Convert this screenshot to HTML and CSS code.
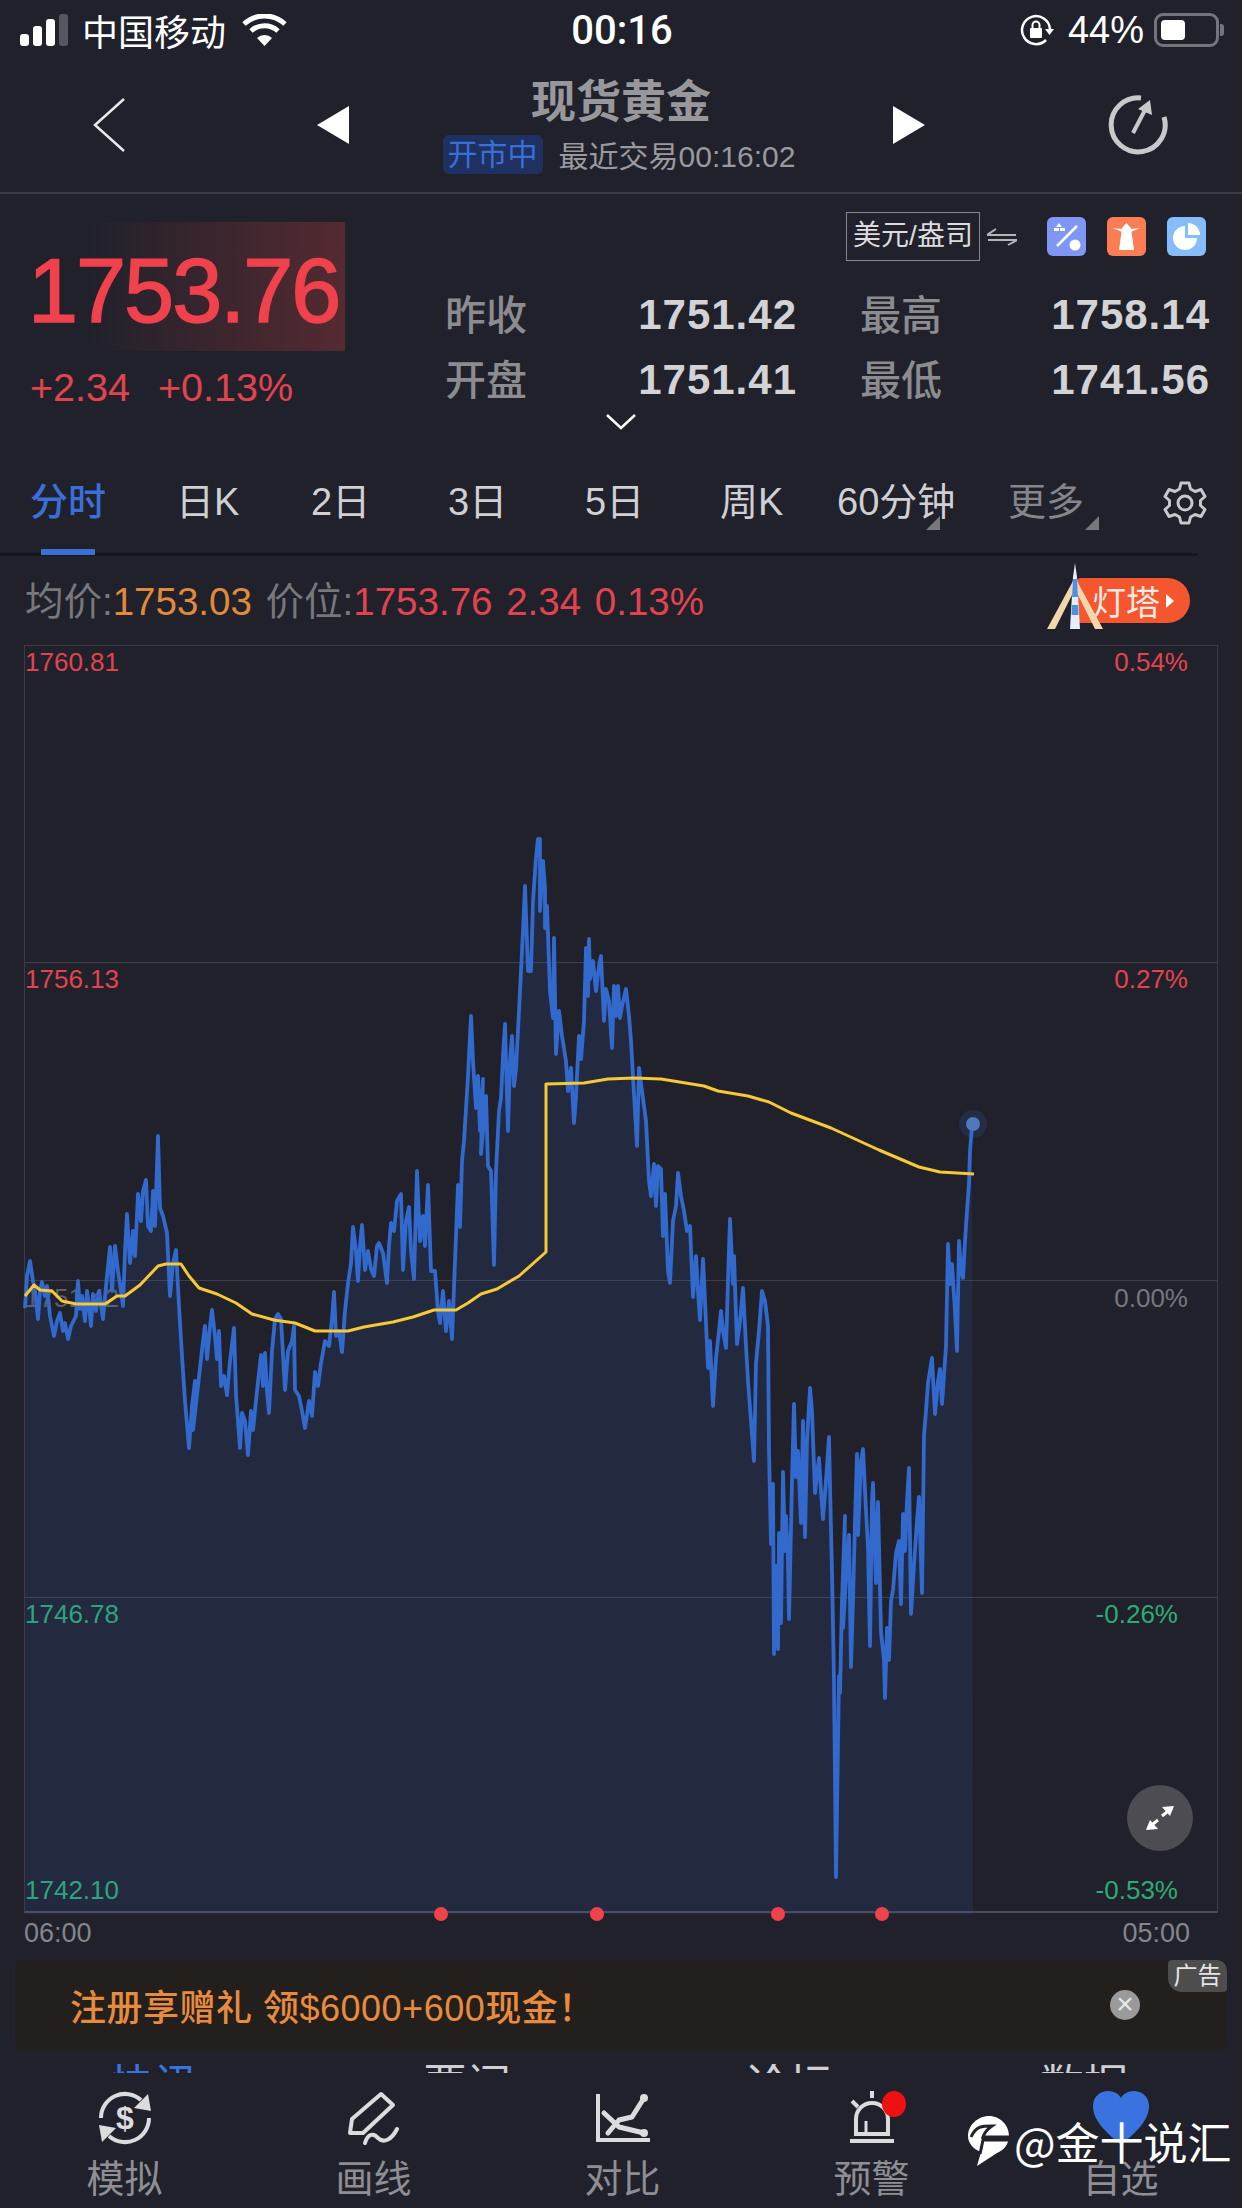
FILE: index.html
```html
<!DOCTYPE html>
<html>
<head>
  <meta charset="utf-8">
  <title>现货黄金</title>
  <link rel="stylesheet" href="styles.css">
</head>

<body>
  <div class="status-bar">
    <div class="status-left">
      <div class="signal"><i></i><i></i><i></i><i class="off"></i></div>
      <span>中国移动</span>
      <svg class="wifi" viewBox="0 0 47 32" width="47" height="32">
        <path d="M3 10 A30 30 0 0 1 44 10" fill="none" stroke="#fff" stroke-width="5"/>
        <path d="M10 17 A20 20 0 0 1 37 17" fill="none" stroke="#fff" stroke-width="5"/>
        <path d="M16 24 L23.5 32 L31 24 A11 11 0 0 0 16 24 Z" fill="#fff"/>
      </svg>
    </div>
    <div class="status-time">00:16</div>
    <div class="status-right">
      <svg class="rotate-lock" viewBox="0 0 34 34" width="34" height="34">
        <path d="M26 27 A14 14 0 1 1 30 16" fill="none" stroke="#fff" stroke-width="2.5"/>
        <path d="M25 16 H34 L29.500 22 Z" fill="#fff"/>
        <rect x="10" y="15" width="12" height="10" rx="1" fill="#fff"/>
        <path d="M12.500 15 V12 A3.500 3.500 0 0 1 19.500 12 V15" fill="none" stroke="#fff" stroke-width="2"/>
      </svg>
      <span>44%</span>
      <div class="battery"><div class="battery-level"></div></div>
      <div class="battery-nub"></div>
    </div>
  </div>

  <div class="nav">
    <svg viewBox="0 0 32 54" width="32" height="54">
      <path d="M31 1 L2 27 L31 53" fill="none" stroke="#e8e8ea" stroke-width="2.500"/>
    </svg>
    <div class="tri tri-left"></div>
    <div class="nav-center">
      <div class="nav-title">现货黄金</div>
      <div class="nav-sub">
        <span class="market-badge">开市中</span>
        <span>最近交易00:16:02</span>
      </div>
    </div>
    <div class="tri tri-right"></div>
    <span></span>
    <svg viewBox="0 0 60 60" width="60" height="60">
      <path d="M33 3 A27 27 0 1 0 56 22" fill="none" stroke="#c9c9cb" stroke-width="5"/>
      <path d="M25 38 L37 15" fill="none" stroke="#c9c9cb" stroke-width="4"/>
      <path d="M42 5 L30 14 L44 20 Z" fill="#c9c9cb"/>
    </svg>
  </div>

  <div class="quote">
    <div class="quote-left">
      <div class="price-box">1753.76</div>
      <div class="change"><span>+2.34</span><span>+0.13%</span></div>
    </div>
    <div class="quote-right">
      <div class="unit-row">
        <div class="unit-box">美元/盎司</div>
        <svg class="swap" viewBox="0 0 30 18" width="30" height="18">
          <path d="M0 7 H29 M0 7 L9 1 M30 12 H1 M30 12 L21 17" fill="none" stroke="#b5b5b8" stroke-width="2"/>
        </svg>
        <div class="tool tool-blue">
          <svg viewBox="0 0 39 39" width="39" height="39">
            <path d="M10 29 L30 9" stroke="#fff" stroke-width="2.500"/>
            <circle cx="28" cy="28" r="5.500" fill="#fff"/>
            <path d="M12 6 l3 4 h-6 Z M7 11 h5 v3 h-5 Z M13 11 h5 v3 h-5 Z" fill="#fff"/>
          </svg>
        </div>
        <div class="tool tool-orange">
          <svg viewBox="0 0 39 39" width="39" height="39">
            <path d="M15 11 L19.500 6 L24 11 L27 33 H12 Z" fill="#fff"/>
            <path d="M6 11 L15 12 V15 Z M33 11 L24 12 V15 Z" fill="#fff"/>
          </svg>
        </div>
        <div class="tool tool-light">
          <svg viewBox="0 0 39 39" width="39" height="39">
            <path d="M18 9 V21 H30 A12 12 0 1 1 18 9 Z" fill="#fff"/>
            <path d="M21 6 A12 12 0 0 1 33 18 H21 Z" fill="#fff"/>
          </svg>
        </div>
      </div>
      <div class="stats">
        <div class="stat"><span class="stat-label">昨收</span><span class="stat-value">1751.42</span></div>
        <div class="stat"><span class="stat-label">最高</span><span class="stat-value">1758.14</span></div>
        <div class="stat"><span class="stat-label">开盘</span><span class="stat-value">1751.41</span></div>
        <div class="stat"><span class="stat-label">最低</span><span class="stat-value">1741.56</span></div>
      </div>
    </div>
  </div>
  <div class="expand-row">
    <svg viewBox="0 0 30 16" width="30" height="16">
      <path d="M1 1 L15 14 L29 1" fill="none" stroke="#fff" stroke-width="2.500"/>
    </svg>
  </div>

  <div class="tabs">
    <div class="tab active">分时</div>
    <div class="tab">日K</div>
    <div class="tab">2日</div>
    <div class="tab">3日</div>
    <div class="tab">5日</div>
    <div class="tab">周K</div>
    <div class="tab has-menu">60分钟</div>
    <div class="tab has-menu dim">更多</div>
    <svg class="gear" viewBox="0 0 44 44" width="44" height="44">
      <path d="M18 2 H26 L27.500 8 L32 10.500 L38 8.500 L42 15.500 L37.500 19.500 V24.500 L42 28.500 L38 35.500 L32 33.500 L27.500 36 L26 42 H18 L16.500 36 L12 33.500 L6 35.500 L2 28.500 L6.500 24.500 V19.500 L2 15.500 L6 8.500 L12 10.500 L16.500 8 Z" fill="none" stroke="#c8c8cb" stroke-width="3" stroke-linejoin="round"/>
      <circle cx="22" cy="22" r="7" fill="none" stroke="#c8c8cb" stroke-width="3"/>
    </svg>
  </div>

  <div class="info-row">
    <div class="info-text">
      <span class="gray">均价:</span><span class="orange">1753.03</span>
      <span class="gray gap">价位:</span><span class="red">1753.76</span>
      <span class="red gap">2.34</span>
      <span class="red gap">0.13%</span>
    </div>
    <div class="beacon">
      <svg class="lighthouse" viewBox="0 0 60 68" width="60" height="68">
        <path d="M28 18 L2 66 H10 L29 28 Z M32 18 L58 66 H50 L31 28 Z" fill="#f3d6ac"/>
        <path d="M30 0 L32 14 L35 66 H25 L28 14 Z" fill="#e6eefa"/>
        <path d="M28 16 H32 L33 34 H27 Z M27 42 H33 L33.500 52 H26.500 Z" fill="#4f8ee0"/>
      </svg>
      <span>灯塔</span>
      <i class="beacon-arrow"></i>
    </div>
  </div>

  <div class="chart">
    <div class="chart-row row-a">
      <div class="label-line"><span class="red">1760.81</span><span class="red pct">0.54%</span></div>
    </div>
    <div class="chart-row row-b">
      <div class="label-line"><span class="red">1756.13</span><span class="red pct">0.27%</span></div>
    </div>
    <div class="chart-row row-c">
      <div class="label-line"><span class="faint">1751.42</span><span class="gray pct">0.00%</span></div>
    </div>
    <div class="chart-row row-d">
      <div class="label-line"><span class="green">1746.78</span><span class="green pct-low">-0.26%</span></div>
      <div class="label-line last"><span class="green">1742.10</span><span class="green pct-low">-0.53%</span></div>
    </div>
    <svg class="chart-plot" viewBox="24 645 1194 1268">
      <polygon id="priceArea" fill="#3a6fd6" fill-opacity="0.12"></polygon>
      <polyline id="priceLine" fill="none" stroke="#3269cd" stroke-width="3.800" stroke-linejoin="round"></polyline>
      <polyline fill="none" stroke="#f6c935" stroke-linejoin="round" stroke-width="3" points="24,1295 33,1284 39,1289 51,1290 61,1300 75,1303 104,1303 116,1295 124,1295 139,1284 157,1265 165,1263 180,1263 188,1275 198,1287 216,1293 235,1302 251,1313 273,1319 294,1322 314,1330 347,1330 363,1326 392,1321 412,1316 433,1309 455,1309 467,1302 480,1293 496,1288 518,1275 545,1251 545,1083 583,1082 607,1078 633,1077 660,1078 703,1085 717,1090 747,1095 768,1101 790,1112 830,1127 878,1149 918,1166 939,1171 973,1173"></polyline>
      <circle cx="972" cy="1123" r="14" fill="#3a6fd6" opacity="0.15"></circle>
      <circle cx="972" cy="1123" r="7" fill="#4f78bd"></circle>
      <circle cx="440" cy="1913" r="7" fill="#f0424a"></circle>
      <circle cx="596" cy="1913" r="7" fill="#f0424a"></circle>
      <circle cx="777" cy="1913" r="7" fill="#f0424a"></circle>
      <circle cx="881" cy="1913" r="7" fill="#f0424a"></circle>
    </svg>
    <div class="fullscreen">
      <svg viewBox="0 0 30 30" width="30" height="30">
        <path d="M17 13 L27 5 M13 17 L3 25" stroke="#fff" stroke-width="3"/>
        <path d="M29 3 L17 4 L25 13 Z M1 27 L13 26 L5 17 Z" fill="#fff"/>
      </svg>
    </div>
  </div>

  <div class="axis"><span>06:00</span><span>05:00</span></div>

  <div class="ad">
    <span class="ad-text">注册享赠礼&nbsp;领$6000+600现金！</span>
    <div class="ad-close">×</div>
    <div class="ad-tag">广告</div>
  </div>

  <div class="peek-row">
    <span class="blue">快讯</span><span>要闻</span><span>论坛</span><span>数据</span>
  </div>

  <div class="bottom-bar">
    <div class="bottom-item">
      <svg viewBox="0 0 54 54" width="54" height="54">
        <path d="M3 27 A24 24 0 0 1 43 9" fill="none" stroke="#dcdcdf" stroke-width="4"/>
        <path d="M51 27 A24 24 0 0 1 11 45" fill="none" stroke="#dcdcdf" stroke-width="4"/>
        <path d="M50 3 L53 20 L36 17 Z M4 51 L1 34 L18 37 Z" fill="#dcdcdf"/>
        <text x="27" y="38" text-anchor="middle" class="dollar">$</text>
      </svg>
      <span>模拟</span>
    </div>
    <div class="bottom-item">
      <svg viewBox="0 0 51 54" width="51" height="54">
        <path d="M2 42 L4 28 L33 3 L45 14 L15 42 Z" fill="none" stroke="#dcdcdf" stroke-width="4" stroke-linejoin="round"/>
        <path d="M17 52 C20 42 26 42 30 47 C36 53 44 48 49 38" fill="none" stroke="#dcdcdf" stroke-width="4" stroke-linecap="round"/>
      </svg>
      <span>画线</span>
    </div>
    <div class="bottom-item">
      <svg viewBox="0 0 54 54" width="54" height="54">
        <path d="M2 3 V49 H54" fill="none" stroke="#dcdcdf" stroke-width="4"/>
        <path d="M8 22 L23 36 L48 42 M12 42 L23 29 L36 26 L48 7" fill="none" stroke="#dcdcdf" stroke-width="5" stroke-linecap="round" stroke-linejoin="round"/>
        <circle cx="48" cy="7" r="4" fill="#dcdcdf"/>
        <circle cx="48" cy="42" r="4" fill="#dcdcdf"/>
      </svg>
      <span>对比</span>
    </div>
    <div class="bottom-item">
      <div class="bell-wrap">
        <svg viewBox="0 0 44 54" width="44" height="54">
          <path d="M6 43 V28 A16 16 0 0 1 38 28 V43 Z" fill="none" stroke="#dcdcdf" stroke-width="4"/>
          <path d="M16 43 V30" stroke="#dcdcdf" stroke-width="3"/>
          <path d="M0 50 H44" stroke="#dcdcdf" stroke-width="4"/>
          <path d="M22 0 V7 M2 10 L8 16" stroke="#dcdcdf" stroke-width="4"/>
        </svg>
        <i class="bell-dot"></i>
      </div>
      <span>预警</span>
    </div>
    <div class="bottom-item">
      <svg viewBox="0 0 56 54" width="56" height="54">
        <path d="M28 54 C14 42 0 30 0 15 C0 5 8 0 15 0 C21 0 26 3 28 7 C30 3 35 0 41 0 C48 0 56 5 56 15 C56 30 42 42 28 54 Z" fill="#3a72e0"/>
      </svg>
      <span>自选</span>
    </div>
  </div>

  <div class="watermark">
    <svg viewBox="0 0 42 50" width="42" height="50">
      <path d="M21 0 C32 0 41 9 41 20 C41 28 36 34 29 37 L9 50 L13 36 C5 33 0 27 0 20 C0 9 10 0 21 0 Z" fill="#fff"/>
      <path d="M3 21 C8 10 14 10 24 10 C18 14 16 18 15 21 H40 V24 H15 L12 38" fill="none" stroke="#21222c" stroke-width="3"/>
    </svg>
    <span>@金十说汇</span>
  </div>

  <script src="chart.js"></script>
</body>
</html>
```

FILE: styles.css
```css
* {
  box-sizing: border-box;
}

body {
  margin: 0;
  width: 1242px;
  height: 2208px;
  overflow: hidden;
  position: relative;
  background-color: #20212b;
  color: #fff;
  font-family: "Liberation Sans", "Noto Sans CJK SC", sans-serif;
}

svg {
  display: block;
}

.red { color: #e2444f; }
.orange { color: #e08a3c; }
.gray { color: #77777c; }
.green { color: #2dab77; }
.faint { color: #5e5f68; }
.blue { color: #3a72e0; }

/* status bar */
.status-bar {
  height: 60px;
  padding: 0 18px 0 20px;
  display: grid;
  grid-template-columns: 1fr auto 1fr;
  align-items: center;
  font-size: 36px;
}

.status-left,
.status-right {
  display: flex;
  align-items: center;
}

.status-right {
  justify-content: flex-end;
  font-size: 38px;
}

.signal {
  display: flex;
  align-items: flex-end;
  gap: 4px;
  height: 32px;
  margin-right: 14px;
}

.signal i {
  display: block;
  width: 9px;
  border-radius: 3px;
  background-color: #fff;
}

.signal i:nth-child(1) { height: 12px; }
.signal i:nth-child(2) { height: 20px; }
.signal i:nth-child(3) { height: 27px; }
.signal i:nth-child(4) { height: 32px; }
.signal i.off { background-color: #55565e; }

.wifi {
  margin-left: 15px;
}

.status-time {
  font-family: Roboto, "Liberation Sans", sans-serif;
  font-weight: 500;
  font-size: 40px;
}

.rotate-lock {
  margin-right: 14px;
}

.battery {
  width: 65px;
  height: 34px;
  margin-left: 10px;
  padding: 4px;
  border: 3px solid #74757b;
  border-radius: 9px;
}

.battery-level {
  width: 24px;
  height: 100%;
  border-radius: 4px;
  background-color: #fff;
}

.battery-nub {
  width: 4px;
  height: 12px;
  margin-left: 1px;
  border-radius: 0 3px 3px 0;
  background-color: #74757b;
}

/* nav */
.nav {
  height: 134px;
  padding: 0 74px 2px 93px;
  display: grid;
  grid-template-columns: 224px 32px 1fr 32px 183px 60px;
  align-items: center;
  border-bottom: 2px solid #3a3b45;
}

.tri {
  width: 0;
  height: 0;
  border-top: 19px solid transparent;
  border-bottom: 19px solid transparent;
}

.tri-left {
  border-right: 32px solid #fff;
}

.tri-right {
  border-left: 32px solid #fff;
}

.nav-center {
  display: flex;
  flex-direction: column;
  align-items: center;
  padding-top: 6px;
}

.nav-title {
  font-size: 45px;
  line-height: 46px;
  font-weight: bold;
  color: #98989c;
}

.nav-sub {
  display: flex;
  align-items: center;
  gap: 16px;
  margin: 6px 4px 0 0;
  font-size: 30px;
  color: #9a9a9e;
}

.market-badge {
  padding: 0 5px;
  line-height: 39px;
  border-radius: 6px;
  background-color: #1e3160;
  color: #3a6fd8;
}

/* quote */
.quote {
  display: flex;
  height: 220px;
}

.quote-left {
  width: 445px;
  padding-top: 28px;
}

.price-box {
  width: 345px;
  height: 129px;
  padding: 9px 0 0 28px;
  line-height: 120px;
  font-size: 90px;
  letter-spacing: -2px;
  color: #f0424c;
  -webkit-text-stroke: 1.500px #f0424c;
  background: linear-gradient(90deg, transparent 25%, #552a31 100%);
}

.change {
  display: flex;
  gap: 28px;
  padding-left: 30px;
  margin-top: 14px;
  font-size: 39.500px;
  color: #e2444f;
}

.quote-right {
  width: 765px;
  padding-top: 18px;
}

.unit-row {
  display: flex;
  align-items: center;
  height: 49px;
  padding-left: 401px;
}

.unit-box {
  flex: none;
  width: 134px;
  height: 49px;
  line-height: 46px;
  text-align: center;
  font-size: 28px;
  white-space: nowrap;
  color: #dcdcde;
  border: 1px solid #85858a;
}

.swap {
  flex: none;
  margin: 0 30px 0 7px;
}

.tool {
  flex: none;
  width: 39px;
  height: 39px;
  margin-right: 21px;
  border-radius: 6px;
}

.tool:last-child {
  margin-right: 0;
}

.tool-blue { background-color: #7f96f5; }
.tool-orange { background-color: #fb7d53; }
.tool-light { background-color: #85bdfb; }

.stats {
  display: grid;
  grid-template-columns: 352px 350px;
  column-gap: 63px;
  margin-top: 21px;
}

.stat {
  display: flex;
  justify-content: space-between;
  align-items: center;
  height: 65px;
}

.stat-label {
  margin-bottom: 6px;
  font-size: 41px;
  font-weight: 500;
  color: #8b8b90;
}

.stat-value {
  font-size: 42px;
  font-weight: bold;
  letter-spacing: 1px;
  color: #d2d2d7;
}

.expand-row {
  height: 26px;
  display: flex;
  justify-content: center;
}

/* tabs */
.tabs {
  display: grid;
  grid-template-columns: 146px 135px 137px 137px 135px 117px 171px 155px 44px;
  align-items: center;
  height: 116px;
  margin-right: 44px;
  padding: 4px 0 0 30px;
  font-size: 38px;
  border-bottom: 3px solid #15151c;
  position: relative;
}

.tab {
  color: #d0d0d4;
  position: relative;
  white-space: nowrap;
}

.tab.dim {
  color: #85858a;
}

.tab.active {
  color: #3a6fd8;
  font-weight: 500;
}

.tab.active::after {
  content: '';
  position: absolute;
  left: 11px;
  top: 78px;
  width: 54px;
  height: 6px;
  background-color: #3a6fd8;
}

.tab.has-menu::after {
  content: '';
  position: absolute;
  top: 45px;
  left: 89px;
  border-bottom: 14px solid #77777c;
  border-left: 14px solid transparent;
}

.tab.dim.has-menu::after {
  left: 77px;
}

.gear {
  margin-top: 8px;
}

/* info row */
.info-row {
  display: flex;
  justify-content: space-between;
  align-items: center;
  height: 89px;
  padding: 0 52px 0 25px;
}

.info-text {
  margin-bottom: 6px;
  font-size: 38.500px;
  white-space: nowrap;
}

.gap {
  margin-left: 3px;
}

.beacon {
  position: relative;
  display: flex;
  align-items: center;
  width: 115px;
  height: 45px;
  padding-left: 17px;
  font-size: 34px;
  border-radius: 6px 23px 23px 6px;
  background-color: #f4572f;
  color: #ffe9e0;
}

.lighthouse {
  position: absolute;
  left: -30px;
  top: -15px;
}

.beacon-arrow {
  margin-left: 6px;
  border-left: 8px solid #fff;
  border-top: 7px solid transparent;
  border-bottom: 7px solid transparent;
}

/* chart */
.chart {
  position: relative;
  display: flex;
  flex-direction: column;
  width: 1194px;
  height: 1268px;
  margin-left: 24px;
  border: 1px solid #3a3b45;
  border-bottom: 2px solid #4a4b57;
  font-size: 26px;
}

.chart-row {
  display: flex;
  flex-direction: column;
  justify-content: space-between;
  padding-top: 1px;
  border-bottom: 1px solid #3e3f49;
}

.row-a { height: 317px; }
.row-b { height: 318px; }
.row-c { height: 317px; }
.row-d { height: 313px; border-bottom: none; }

.label-line {
  display: flex;
  justify-content: space-between;
  line-height: 30px;
  padding-right: 29px;
}

.label-line.last {
  padding-bottom: 6px;
}

.label-line .pct-low {
  margin-right: 10px;
}

.row-c .label-line {
  margin-top: 1px;
}

.chart-plot {
  position: absolute;
  left: 0;
  top: 0;
  width: 1194px;
  height: 1268px;
  overflow: visible;
}

.fullscreen {
  position: absolute;
  left: 1102px;
  top: 1139px;
  width: 66px;
  height: 66px;
  display: flex;
  align-items: center;
  justify-content: center;
  border-radius: 50%;
  background-color: #4c4c52;
}

.axis {
  display: flex;
  justify-content: space-between;
  height: 47px;
  padding: 4px 52px 0 24px;
  font-size: 27px;
  line-height: 32px;
  color: #85858a;
}

/* ad */
.ad {
  position: relative;
  display: flex;
  align-items: center;
  width: 1212px;
  height: 90px;
  margin-left: 15px;
  padding-left: 55px;
  border-radius: 6px;
  background-color: #221f1c;
}

.ad-text {
  font-size: 36px;
  font-weight: 500;
  letter-spacing: 0.500px;
  color: #e88b3f;
}

.ad-close {
  position: absolute;
  left: 1095px;
  top: 30px;
  width: 30px;
  height: 30px;
  line-height: 28px;
  text-align: center;
  font-size: 30px;
  border-radius: 50%;
  color: #e8e8e8;
  background-color: #9a9a9a;
}

.ad-tag {
  position: absolute;
  right: 0;
  top: 0;
  width: 59px;
  height: 32px;
  line-height: 31px;
  text-align: center;
  font-size: 24px;
  border-radius: 4px 10px 4px 14px;
  color: #e4e4e4;
  background-color: #4d4d4d;
}

/* bottom bar */
.peek-row {
  display: grid;
  grid-template-columns: 313px 322px 295px 202px;
  align-items: end;
  height: 9px;
  margin-top: 14px;
  padding-left: 110px;
  overflow: hidden;
  font-size: 44px;
  line-height: 44px;
  color: #d0d0d4;
}

.peek-row .blue {
  color: #3a72e0;
}

.bottom-bar {
  display: grid;
  grid-template-columns: repeat(5, 249px);
  height: 135px;
  padding-top: 18px;
}

.bottom-item {
  display: flex;
  flex-direction: column;
  align-items: center;
  font-size: 38px;
  line-height: 50px;
  color: #8e8e93;
}

.bottom-item span {
  margin-top: 9px;
}

.dollar {
  font-size: 32px;
  font-weight: bold;
  fill: #dcdcdf;
}

.bell-wrap {
  position: relative;
}

.bell-dot {
  position: absolute;
  right: -12px;
  top: 0;
  width: 24px;
  height: 26px;
  border-radius: 50%;
  background-color: #ee1111;
}

.watermark {
  position: absolute;
  left: 968px;
  top: 2116px;
  display: flex;
  align-items: flex-start;
  gap: 4px;
  font-family: "Noto Sans CJK SC", sans-serif;
  font-size: 44px;
  line-height: 50px;
  white-space: nowrap;
}
```

FILE: chart.js
```js
// price line, in page pixels (x, y)
const pricePoints = "24,1307 26,1275 29,1260 32,1280 34,1290 37,1318 39,1290 41,1281 44,1295 46,1285 49,1315 53,1335 56,1320 59,1312 62,1330 64,1322 67,1338 70,1325 75,1315 77,1280 79,1308 81,1295 84,1320 86,1290 88,1305 90,1325 92,1293 95,1310 98,1290 102,1318 105,1285 109,1246 111,1290 114,1245 117,1270 120,1290 122,1305 124,1250 126,1213 129,1262 132,1230 134,1255 137,1193 140,1220 142,1190 145,1179 147,1225 150,1230 152,1190 154,1225 157,1135 159,1207 162,1215 166,1232 169,1295 172,1262 175,1249 178,1305 181,1355 184,1400 188,1447 191,1405 194,1380 192,1429 197,1385 202,1340 204,1325 206,1358 209,1325 211,1309 214,1335 216,1358 218,1330 220,1385 223,1375 226,1394 229,1360 233,1327 235,1394 237,1420 239,1447 241,1412 244,1420 247,1454 250,1410 252,1429 256,1390 260,1354 262,1385 264,1352 266,1390 268,1412 271,1350 274,1318 277,1313 280,1318 284,1389 287,1350 291,1340 293,1325 294,1389 298,1395 301,1410 304,1427 308,1400 311,1415 314,1371 317,1385 320,1362 324,1340 328,1345 331,1318 333,1291 335,1335 338,1330 341,1351 344,1310 347,1282 350,1262 352,1226 355,1250 357,1280 359,1245 361,1224 364,1269 367,1250 370,1268 373,1275 376,1245 378,1242 382,1252 386,1282 388,1245 390,1222 393,1230 396,1200 400,1193 402,1269 405,1220 408,1206 410,1250 413,1278 416,1170 419,1240 422,1215 424,1245 427,1184 430,1270 434,1270 437,1310 439,1322 442,1290 445,1330 448,1300 451,1338 454,1260 457,1184 459,1226 461,1160 463,1140 467,1075 470,1015 472,1060 475,1107 477,1075 479,1130 482,1078 480,1153 485,1095 487,1165 490,1170 493,1264 495,1170 498,1110 500,1097 502,1055 504,1023 507,1130 509,1060 511,1035 513,1085 515,1068 518,1010 522,930 524,885 527,970 530,970 532,900 535,857 537,838 539,838 539,910 542,860 544,888 544,927 546,905 549,990 552,1017 553,937 555,1053 558,1010 561,1035 565,1060 567,1090 570,1067 573,1122 575,1095 578,1035 580,1058 583,1020 585,947 587,995 588,938 589,978 592,960 595,990 598,965 600,955 603,1020 605,988 608,1000 611,1047 613,985 615,1015 617,985 619,1017 621,1005 625,988 628,1015 630,1040 633,1093 636,1145 638,1067 641,1090 645,1120 648,1180 650,1195 653,1163 655,1205 657,1165 660,1168 662,1235 664,1193 667,1270 669,1282 672,1220 675,1205 677,1172 680,1195 683,1210 686,1230 689,1225 692,1296 695,1255 697,1290 699,1319 702,1258 704,1300 707,1367 709,1340 712,1405 715,1357 718,1330 720,1310 722,1330 725,1347 727,1280 729,1218 732,1283 733,1255 736,1343 739,1320 742,1287 745,1345 747,1380 750,1420 753,1460 755,1362 758,1330 761,1290 764,1300 767,1325 768,1450 770,1543 772,1483 773,1653 775,1565 777,1648 778,1532 780,1622 782,1471 784,1550 785,1515 787,1560 788,1618 791,1480 793,1403 795,1476 797,1450 800,1522 802,1420 804,1536 806,1440 809,1387 811,1410 814,1492 818,1457 820,1490 822,1518 825,1480 828,1436 829,1485 831,1571 833,1680 835,1876 838,1675 839,1692 841,1600 844,1515 842,1627 846,1560 848,1534 850,1666 852,1600 854,1520 856,1453 857,1534 860,1460 862,1448 865,1510 867,1546 869,1645 871,1500 872,1482 875,1582 877,1501 880,1631 883,1659 884,1697 886,1627 888,1659 890,1600 892,1589 895,1552 898,1540 900,1603 902,1513 904,1550 906,1500 908,1467 910,1613 913,1564 916,1520 918,1496 921,1592 923,1434 925,1410 927,1382 931,1357 934,1413 937,1380 939,1368 941,1403 945,1345 947,1243 949,1283 951,1263 954,1310 956,1350 958,1240 960,1270 962,1277 964,1240 966,1210 968,1183 969,1150 971,1125";

document.getElementById("priceLine").setAttribute("points", pricePoints);
document.getElementById("priceArea").setAttribute("points", pricePoints + " 972,1913 24,1913");
```
